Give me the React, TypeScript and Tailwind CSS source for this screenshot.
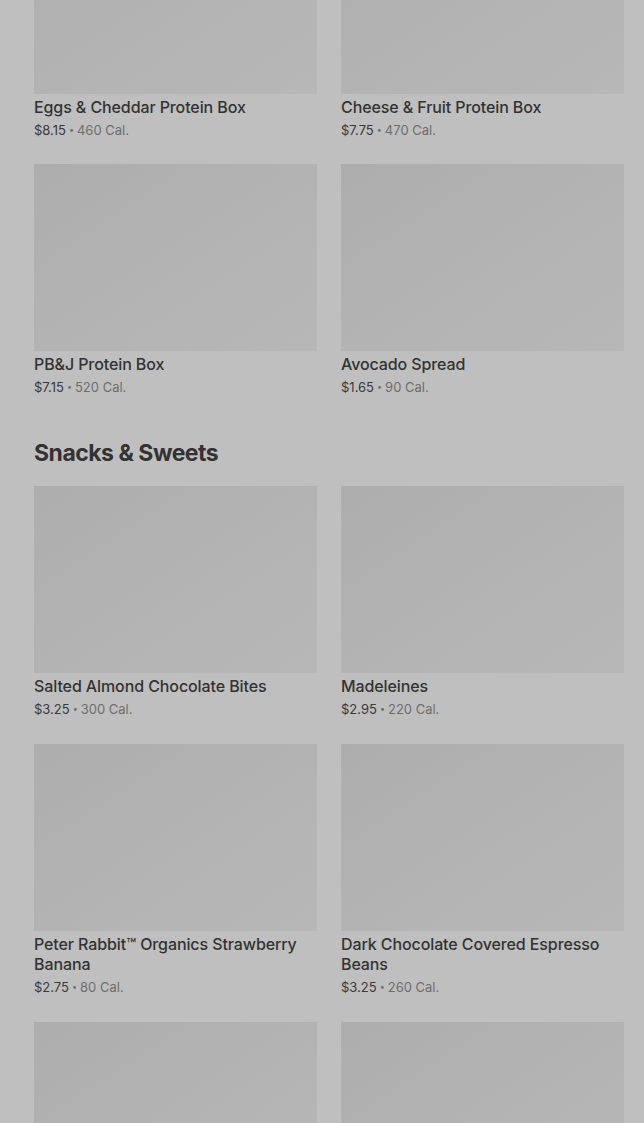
import React from "react";

type Item = { name: string; price: string; cal: string };

const groupA: Item[] = [
  { name: "Eggs & Cheddar Protein Box", price: "$8.15", cal: "460 Cal." },
  { name: "Cheese & Fruit Protein Box", price: "$7.75", cal: "470 Cal." },
  { name: "PB&J Protein Box", price: "$7.15", cal: "520 Cal." },
  { name: "Avocado Spread", price: "$1.65", cal: "90 Cal." },
];

const groupB: Item[] = [
  { name: "Salted Almond Chocolate Bites", price: "$3.25", cal: "300 Cal." },
  { name: "Madeleines", price: "$2.95", cal: "220 Cal." },
  { name: "Peter Rabbit™ Organics Strawberry Banana", price: "$2.75", cal: "80 Cal." },
  { name: "Dark Chocolate Covered Espresso Beans", price: "$3.25", cal: "260 Cal." },
  { name: "", price: "", cal: "" },
  { name: "", price: "", cal: "" },
];

function Card({ item }: { item: Item }) {
  return (
    <div className="flex flex-col">
      <div className="h-[187px] w-full bg-gradient-to-br from-[#adadad] via-[#b3b3b3] to-[#b7b7b7]" />
      {item.name && (
        <>
          <div className="mt-[3px] text-[16px] leading-5 font-medium text-[#333333] tracking-[-0.1px]">
            {item.name}
          </div>
          <div className="mt-[4px] flex h-[18px] items-center text-[13px] leading-[18px] text-[#6e6e6e]">
            <span className="text-[#3a3a3a]">{item.price}</span>
            <span className="mx-[3px] text-[9px] leading-[18px]">•</span>
            <span>{item.cal}</span>
          </div>
        </>
      )}
    </div>
  );
}

export default function App() {
  return (
    <div
      className="h-[1123px] w-[644px] overflow-hidden bg-[#bfbfbf]"
      style={{ fontFamily: "Inter, 'Noto Sans', sans-serif" }}
    >
      <div className="mt-[-93px] pl-[34px] pr-[20px]">
        <div className="grid grid-cols-2 gap-x-[24px] gap-y-[25px]">
          {groupA.map((it, i) => (
            <Card key={i} item={it} />
          ))}
        </div>
        <h2 className="mt-[43px] mb-[19px] text-[23px] leading-[28px] font-bold text-[#333333] tracking-[-0.5px]">
          Snacks &amp; Sweets
        </h2>
        <div className="grid grid-cols-2 gap-x-[24px] gap-y-[26px]">
          {groupB.map((it, i) => (
            <Card key={i} item={it} />
          ))}
        </div>
      </div>
    </div>
  );
}
